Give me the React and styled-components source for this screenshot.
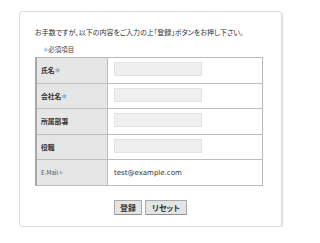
import React from "react";
import styled, { createGlobalStyle } from "styled-components";

const Global = createGlobalStyle`
  html, body { margin: 0; padding: 0; background: #ffffff; }
  body { font-family: "Noto Sans CJK JP", "Noto Sans", sans-serif; color: #333; }
`;

const Page = styled.div`
  padding: 11px 0 0 19px;
`;

const Card = styled.div`
  box-sizing: border-box;
  width: 263px;
  height: 216px;
  border: 1px solid #dcdcdc;
  border-radius: 3px;
  box-shadow: 1px 1px 1px rgba(0, 0, 0, 0.12);
  padding: 15px 18px 0 15px;
  display: flex;
  flex-direction: column;
`;

const Lead = styled.p`
  margin: 0;
  font-size: 7px;
  line-height: 10px;
  font-feature-settings: "palt";
  color: #333;
  white-space: nowrap;
`;

const Note = styled.p`
  margin: 7px 0 3px 8px;
  font-size: 6.5px;
  line-height: 10px;
  font-feature-settings: "palt";
  color: #444;
`;

const Mark = styled.span`
  color: #7f9cc4;
`;

const Table = styled.div`
  box-sizing: border-box;
  width: 228px;
  display: grid;
  grid-template-columns: 71px 1fr;
  grid-auto-rows: 25.6px;
  border-top: 1px solid #b8b8b8;
  border-left: 2px solid #a8a8a8;
  border-right: 1px solid #b8b8b8;
`;

const Label = styled.div`
  box-sizing: border-box;
  display: flex;
  align-items: center;
  padding-left: 4px;
  background: #e6e6e6;
  border-right: 1px solid #bdbdbd;
  border-bottom: 1px solid #bdbdbd;
  font-size: ${(p) => (p.$latin ? "6px" : "6.8px")};
  font-weight: ${(p) => (p.$latin ? 400 : 700)};
  font-feature-settings: "palt";
  color: ${(p) => (p.$latin ? "#555" : "#333")};
`;

const Value = styled.div`
  box-sizing: border-box;
  display: flex;
  align-items: center;
  padding-left: 6px;
  background: #ffffff;
  border-bottom: 1px solid #bdbdbd;
  font-family: "DejaVu Sans", "Noto Sans", sans-serif;
  font-size: 7px;
  color: #333;
`;

const Field = styled.div`
  box-sizing: border-box;
  width: 88px;
  height: 14px;
  margin-top: -2px;
  background: #efefef;
  border: 1px solid #e3e3e3;
`;

const Actions = styled.div`
  display: flex;
  justify-content: center;
  gap: 3px;
  margin-top: 14px;
  padding-left: 3px;
`;

const Button = styled.button`
  box-sizing: border-box;
  height: 15px;
  padding: 0 ${(p) => p.$pad}px;
  margin: 0;
  background: #e4e4e4;
  border: 1px solid #a9a9a9;
  border-bottom-color: #8f8f8f;
  border-radius: 1px;
  font-family: "Noto Sans CJK JP", sans-serif;
  font-size: 8px;
  font-weight: 700;
  line-height: 13px;
  color: #333;
  font-feature-settings: "palt";
`;

const rows = [
  { label: "氏名", req: true },
  { label: "会社名", req: true },
  { label: "所属部署" },
  { label: "役職" },
];

export default function App() {
  return (
    <>
      <Global />
      <Page>
        <Card>
          <Lead>お手数ですが、以下の内容をご入力の上「登録」ボタンをお押し下さい。</Lead>
          <Note>
            <Mark>＊</Mark>必須項目
          </Note>
          <Table>
            {rows.map((r) => (
              <React.Fragment key={r.label}>
                <Label>
                  {r.label}
                  {r.req && <Mark>＊</Mark>}
                </Label>
                <Value>
                  <Field />
                </Value>
              </React.Fragment>
            ))}
            <Label $latin>
              E-Mail<Mark>＊</Mark>
            </Label>
            <Value>test@example.com</Value>
          </Table>
          <Actions>
            <Button $pad={5}>登録</Button>
            <Button $pad={6}>リセット</Button>
          </Actions>
        </Card>
      </Page>
    </>
  );
}
